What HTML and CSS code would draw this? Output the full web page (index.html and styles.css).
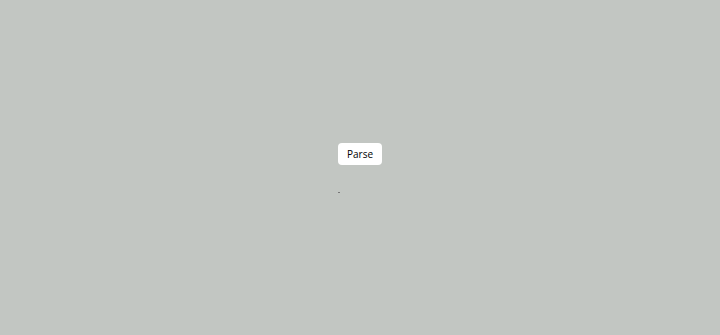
FILE: index.html
```html
<!DOCTYPE html>
<html>
<head>
<meta charset="utf-8">
<link rel="stylesheet" href="styles.css">
</head>
<body>
<main class="stage">
  <div class="panel">
    <button class="parse-btn">Parse</button>
    <div class="output"><span class="dot"></span></div>
  </div>
</main>
</body>
</html>
```
FILE: styles.css
```css
html, body {
  margin: 0;
  padding: 0;
  height: 100%;
  background: #c2c6c2;
  font-family: "Open Sans", "Noto Sans", sans-serif;
}
.stage {
  height: 100%;
  display: flex;
  align-items: center;
  justify-content: center;
}
.panel {
  display: flex;
  flex-direction: column;
  align-items: flex-start;
  width: 44px;
}
.parse-btn {
  width: 44px;
  height: 22px;
  padding: 0;
  border: none;
  border-radius: 4px;
  background: #ffffff;
  color: #000;
  font-family: "Open Sans", "Noto Sans", sans-serif;
  font-size: 10px;
  line-height: 22px;
}
.output {
  margin-top: 27px;
  height: 1px;
}
.dot {
  display: block;
  width: 2px;
  height: 1px;
  background: #777;
}
```
